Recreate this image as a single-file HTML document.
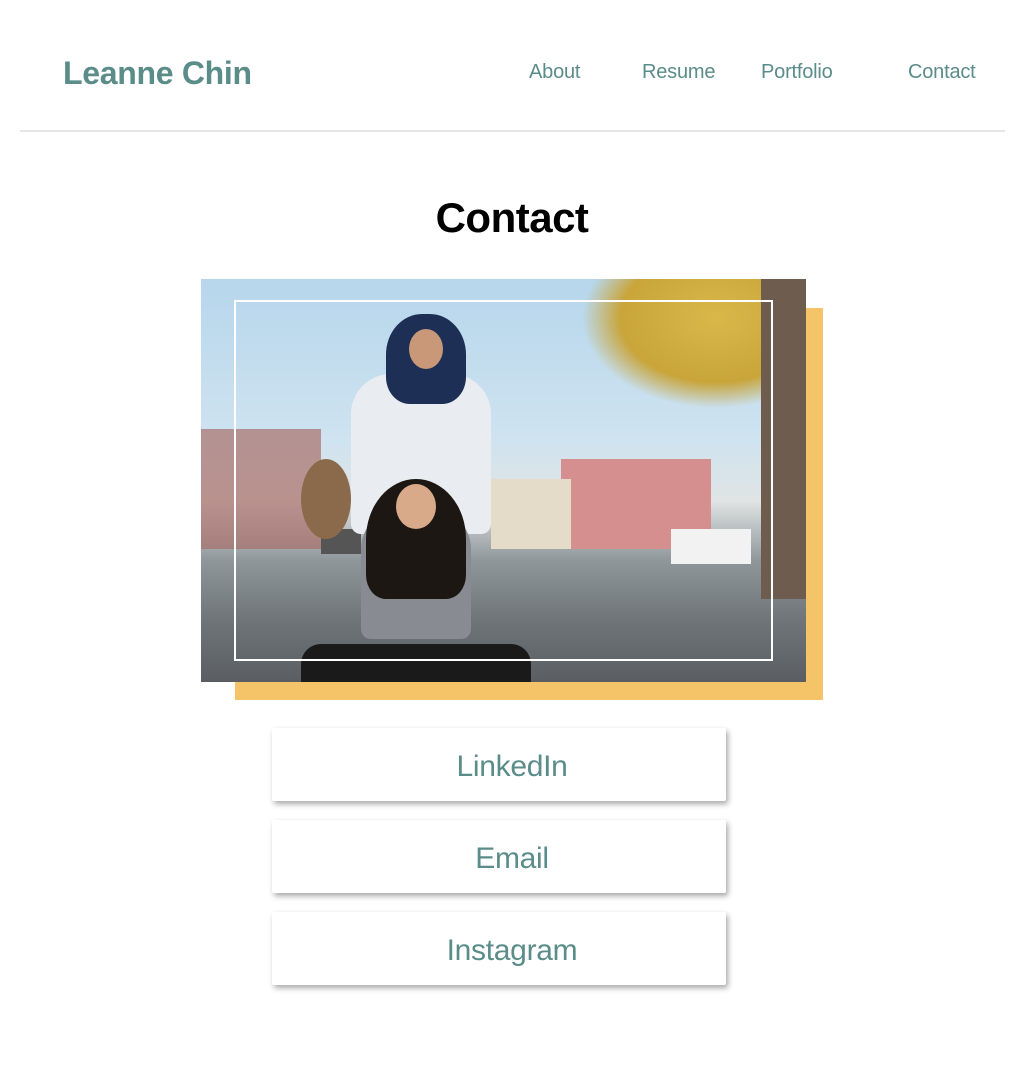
<!DOCTYPE html>
<html><head><meta charset="utf-8"><style>
*{margin:0;padding:0;box-sizing:border-box}
body{width:1024px;height:1066px;background:#fff;font-family:"Liberation Sans",sans-serif;position:relative;overflow:hidden}
.t{color:#5a8c89;position:absolute;white-space:nowrap}
.logo{left:63px;top:55px;font-size:32px;font-weight:bold;letter-spacing:-0.3px}
.nav{top:61px;font-size:20px;letter-spacing:-0.2px}
.hr{position:absolute;left:20px;top:130px;width:985px;height:2px;background:#e6e6e6}
h1{position:absolute;top:194px;left:0;width:1024px;text-align:center;font-size:42px;font-weight:bold;color:#000;letter-spacing:-0.5px}
.yel{position:absolute;left:235px;top:308px;width:588px;height:392px;background:#f5c468}
.photo{position:absolute;left:201px;top:279px;width:605px;height:403px;overflow:hidden;
background:linear-gradient(#b6d6ec 0%,#cfe3f0 40%,#e0e4e4 55%,#8f969a 70%,#6e7478 85%,#5a5e62 100%)}
.photo div{position:absolute}
.frame{position:absolute;left:234px;top:300px;width:539px;height:361px;border:2px solid #fff}
.btn{position:absolute;left:272px;width:454px;height:73px;background:#fff;box-shadow:2px 3px 6px rgba(0,0,0,.35);border-radius:2px;color:#5a8c89;font-size:30px;text-align:center;line-height:78px;padding-left:26px;letter-spacing:-0.3px}
</style></head><body>
<div class="t logo">Leanne Chin</div>
<div class="t nav" style="left:529px">About</div>
<div class="t nav" style="left:642px">Resume</div>
<div class="t nav" style="left:761px">Portfolio</div>
<div class="t nav" style="left:908px">Contact</div>
<div class="hr"></div>
<h1>Contact</h1>
<div class="yel"></div>
<div class="photo">
 <div style="left:0;top:150px;width:120px;height:120px;background:#a86f6a;opacity:.7"></div>
 <div style="left:360px;top:180px;width:150px;height:90px;background:#d58f8f"></div>
 <div style="left:290px;top:200px;width:80px;height:70px;background:#e4dcc8"></div>
 <div style="left:380px;top:0;width:225px;height:130px;background:radial-gradient(ellipse at 60% 30%,#d9b84a,#c9a53a 50%,transparent 70%)"></div>
 <div style="left:560px;top:0;width:45px;height:320px;background:#6e5d4e"></div>
 <div style="left:470px;top:250px;width:80px;height:35px;background:#f2f2f2"></div>
 <div style="left:120px;top:250px;width:40px;height:25px;background:#555"></div>
 <div style="left:100px;top:180px;width:50px;height:80px;background:#8a6a4a;border-radius:50%"></div>
 <div style="left:150px;top:95px;width:140px;height:160px;background:#e9ecf0;border-radius:40px 40px 10px 10px"></div>
 <div style="left:185px;top:35px;width:80px;height:90px;background:#1e2f55;border-radius:45% 45% 30% 30%"></div>
 <div style="left:208px;top:50px;width:34px;height:40px;background:#c89878;border-radius:50%"></div>
 <div style="left:160px;top:230px;width:110px;height:130px;background:#888c92;border-radius:40px 40px 10px 10px"></div>
 <div style="left:165px;top:200px;width:100px;height:120px;background:#1d1714;border-radius:50% 50% 20% 20%"></div>
 <div style="left:195px;top:205px;width:40px;height:45px;background:#d8aa8a;border-radius:50%"></div>
 <div style="left:100px;top:365px;width:230px;height:40px;background:#1a1a1a;border-radius:20px 20px 0 0"></div>
</div>
<div class="frame"></div>
<div class="btn" style="top:728px">LinkedIn</div>
<div class="btn" style="top:820px">Email</div>
<div class="btn" style="top:912px">Instagram</div>
</body></html>
